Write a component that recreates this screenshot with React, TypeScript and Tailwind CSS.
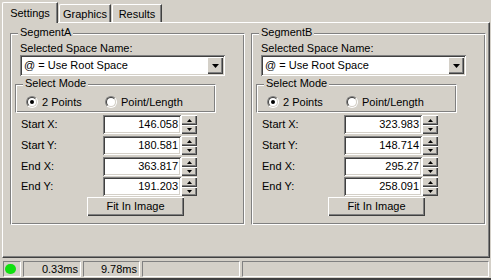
import React from "react";

const sunken =
  "bg-white shadow-[inset_1px_1px_0_#808080,inset_-1px_-1px_0_#ffffff,inset_2px_2px_0_#404040,inset_-2px_-2px_0_#d4d0c8]";
const raised =
  "bg-[#d4d0c8] shadow-[inset_1px_1px_0_#ffffff,inset_-1px_-1px_0_#404040,inset_-2px_-2px_0_#808080]";
const etched =
  "border border-t-[#808080] border-l-[#808080] border-b-white border-r-white shadow-[inset_1px_1px_0_#ffffff,inset_-1px_-1px_0_#808080]";

function GroupBox({ title, className, children }: { title: string; className: string; children?: React.ReactNode }) {
  return (
    <div className={`flex flex-col ${etched} ${className}`}>
      <div className="-mt-[8px] ml-[7px] self-start bg-[#d4d0c8] px-[2px]">{title}</div>
      {children}
    </div>
  );
}

function Radio({ checked, label }: { checked?: boolean; label: string }) {
  return (
    <div className="flex items-center gap-[4px]">
      <div className="h-[12px] w-[12px] rounded-full border border-t-[#808080] border-l-[#808080] border-b-white border-r-white">
        <div className="flex h-full w-full items-center justify-center rounded-full border border-t-[#404040] border-l-[#404040] border-b-[#d4d0c8] border-r-[#d4d0c8] bg-white">
          {checked && <div className="h-[4px] w-[4px] rounded-full bg-black" />}
        </div>
      </div>
      <span>{label}</span>
    </div>
  );
}

function Spinner() {
  return (
    <div className="flex w-[16px] flex-col">
      <div className={`flex h-[10px] items-center justify-center ${raised}`}>
        <svg width="5" height="3" viewBox="0 0 5 3">
          <path d="M2.5 0 L5 3 L0 3 Z" fill="#000" />
        </svg>
      </div>
      <div className={`flex h-[9px] items-center justify-center ${raised}`}>
        <svg width="5" height="3" viewBox="0 0 5 3">
          <path d="M0 0 L5 0 L2.5 3 Z" fill="#000" />
        </svg>
      </div>
    </div>
  );
}

function NumRow({ label, value, className }: { label: string; value: string; className: string }) {
  return (
    <div className={`flex h-[19px] items-center ${className}`}>
      <span className="ml-[10px] w-[82px]">{label}</span>
      <div className={`flex h-full w-[78px] items-center justify-end pr-[3px] ${sunken}`}>{value}</div>
      <Spinner />
    </div>
  );
}

function Segment({ name, values }: { name: string; values: string[] }) {
  return (
    <GroupBox title={name} className="h-[192px] w-[235px]">
      <div className="mt-[3px] ml-[9px]">Selected Space Name:</div>
      <div className={`ml-[9px] flex h-[21px] w-[205px] items-center p-[2px] ${sunken}`}>
        <span className="flex-1 pl-[2px]">@ = Use Root Space</span>
        <div className={`flex h-[17px] w-[16px] items-center justify-center ${raised}`}>
          <svg width="7" height="4" viewBox="0 0 7 4">
            <path d="M0 0 L7 0 L3.5 4 Z" fill="#000" />
          </svg>
        </div>
      </div>
      <GroupBox title="Select Mode" className="mt-[8px] ml-[4px] h-[29px] w-[201px]">
        <div className="mt-[5px] flex h-[14px] items-center pl-[10px]">
          <div className="w-[79px]">
            <Radio checked label="2 Points" />
          </div>
          <Radio label="Point/Length" />
        </div>
      </GroupBox>
      <NumRow label="Start X:" value={values[0]} className="mt-[2px]" />
      <NumRow label="Start Y:" value={values[1]} className="mt-[2px]" />
      <NumRow label="End X:" value={values[2]} className="mt-[2px]" />
      <NumRow label="End Y:" value={values[3]} className="mt-[1px]" />
      <div className={`mt-[1px] ml-[76px] flex h-[19px] w-[97px] items-center justify-center ${raised}`}>
        Fit In Image
      </div>
    </GroupBox>
  );
}

export default function App() {
  return (
    <div className="flex h-[280px] w-[491px] flex-col overflow-hidden bg-[#d4d0c8] font-['Liberation_Sans',Arial,sans-serif] text-[11px] leading-[13px] text-black">
      {/* tabs */}
      <div className="flex h-[22px] items-end pl-[2px]">
        <div className="relative z-10 -mb-px flex h-[21px] w-[56px] justify-center rounded-tl-[2px] border-t border-r border-l border-t-white border-l-white border-r-[#404040] bg-[#d4d0c8] pt-[4px] shadow-[inset_-1px_0_0_#808080]">
          Settings
        </div>
        <div className="ml-[1px] flex h-[18px] w-[52px] justify-center rounded-tl-[2px] border-t border-r border-l border-t-white border-l-white border-r-[#404040] pt-[3px] shadow-[inset_-1px_0_0_#808080]">
          Graphics
        </div>
        <div className="ml-[1px] flex h-[18px] w-[50px] justify-center rounded-tl-[2px] border-t border-r border-l border-t-white border-l-white border-r-[#404040] pt-[3px] shadow-[inset_-1px_0_0_#808080]">
          Results
        </div>
      </div>

      {/* panel */}
      <div className="ml-[2px] flex h-[236px] w-[488px] gap-[6px] border border-t-white border-l-white border-r-[#404040] border-b-[#404040] pt-[10px] pl-[7px] shadow-[inset_-1px_-1px_0_#808080]">
        <Segment name="SegmentA" values={["146.058", "180.581", "363.817", "191.203"]} />
        <Segment name="SegmentB" values={["323.983", "148.714", "295.27", "258.091"]} />
      </div>

      {/* status bar */}
      <div className="flex h-[22px] flex-col">
        <div className="mt-[3px] flex h-[16px] gap-[2px] pl-[3px] pr-[2px]">
          <div className="flex w-[18px] items-center border border-t-[#808080] border-l-[#808080] border-b-white border-r-white pl-[1px]">
            <div className="h-[10px] w-[11px] rounded-full bg-[#10e010]" />
          </div>
          <div className="flex w-[58px] items-center justify-end border border-t-[#808080] border-l-[#808080] border-b-white border-r-white pr-[2px]">
            0.33ms
          </div>
          <div className="flex w-[57px] items-center justify-end border border-t-[#808080] border-l-[#808080] border-b-white border-r-white pr-[2px]">
            9.78ms
          </div>
          <div className="w-[98px] border border-t-[#808080] border-l-[#808080] border-b-white border-r-white" />
          <div className="flex-1 border border-t-[#808080] border-l-[#808080] border-b-white border-r-white" />
        </div>
        <div className="mt-[1px] h-[2px] bg-[#404040]" />
      </div>
    </div>
  );
}
